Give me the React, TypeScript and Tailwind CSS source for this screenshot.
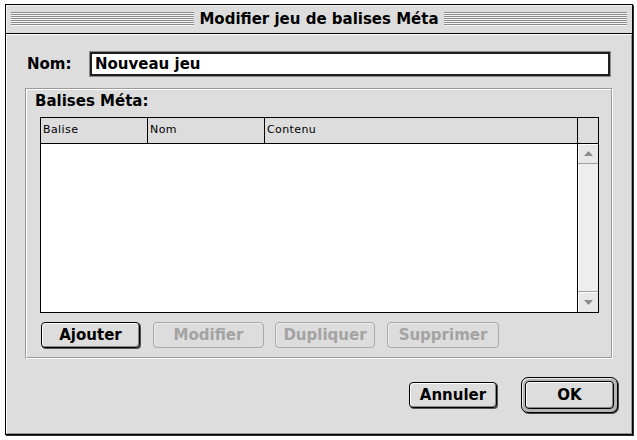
import React from 'react'

const stripes =
  'flex-1 h-[14px] bg-[repeating-linear-gradient(to_bottom,#8a8a8a_0px,#8a8a8a_1px,#f6f6f6_1px,#f6f6f6_2px)]'

function MacButton({
  label,
  width,
  disabled,
  className = '',
}: {
  label: string
  width: string
  disabled?: boolean
  className?: string
}) {
  return (
    <div
      className={`${width} h-[26px] rounded-[4px] border flex items-center justify-center text-[15px] font-bold ${
        disabled
          ? 'border-[#aaaaaa] text-[#a3a3a3] bg-[#dddddd] shadow-[inset_1px_1px_0_#ececec]'
          : 'border-black text-black bg-[#dddddd] shadow-[inset_1px_1px_0_#ffffff,inset_-1px_-1px_0_#888888,1px_1px_0_#555555]'
      } ${className}`}
    >
      {label}
    </div>
  )
}

function Arrow({ down }: { down?: boolean }) {
  return (
    <svg width="9" height="5" viewBox="0 0 9 5">
      <path d={down ? 'M0 0 L9 0 L4.5 5 Z' : 'M0 5 L4.5 0 L9 5 Z'} fill="#8c8c8c" />
    </svg>
  )
}

export default function App() {
  return (
    <div className="w-[637px] h-[440px] bg-white pt-[4px] pl-[5px] font-['DejaVu_Sans',sans-serif] text-black">
      <div className="w-[628px] h-[431px] border border-black bg-[#dddddd] flex flex-col shadow-[1px_1px_0_#333333]">
        {/* title bar */}
        <div className="h-[29px] border-b border-black flex items-center px-[5px] shadow-[inset_1px_1px_0_#f4f4f4]">
          <div className={stripes} />
          <div className="px-[5px] text-[15px] font-bold leading-[18px] whitespace-nowrap">
            Modifier jeu de balises Méta
          </div>
          <div className={stripes} />
        </div>

        <div className="flex-1 flex flex-col border-l border-t border-white border-r-[#999999] border-b-[#999999] border-r border-b">
          {/* name row */}
          <div className="mt-[16px] h-[26px] mx-[20px] flex items-center">
            <div className="w-[62px] text-[15px] font-bold">Nom:</div>
            <div className="flex-1 mx-[1px] h-[24px] bg-white border-2 border-[#1e1e1e] shadow-[0_0_0_1px_#8a8a8a] flex items-center pl-[3px] text-[15px] font-bold">
              Nouveau jeu
            </div>
          </div>

          {/* group box */}
          <div className="mt-[11px] mx-[18px] h-[271px] border border-t-[#9a9a9a] border-l-[#9a9a9a] border-r-white border-b-white">
            <div className="h-full flex flex-col border border-t-white border-l-white border-r-[#9a9a9a] border-b-[#9a9a9a]">
              <div className="mt-[2px] pl-[8px] text-[15px] font-bold leading-[18px]">Balises Méta:</div>

              <div className="mt-[7px] ml-[13px] mr-[12px] h-[196px] border border-black flex flex-col">
                <div className="h-[26px] border-b border-black flex text-[11px] tracking-[0.4px] bg-[#dddddd]">
                  <div className="w-[107px] border-r border-black pl-[2px] flex items-center">Balise</div>
                  <div className="w-[117px] border-r border-black pl-[2px] flex items-center">Nom</div>
                  <div className="flex-1 border-r border-black pl-[2px] flex items-center">Contenu</div>
                  <div className="w-[20px]" />
                </div>
                <div className="flex-1 flex">
                  <div className="flex-1 bg-white" />
                  <div className="w-[21px] border-l border-black flex flex-col bg-[#eeeeee]">
                    <div className="h-[20px] border-b border-[#a0a0a0] flex items-center justify-center bg-[#e8e8e8] shadow-[inset_1px_1px_0_#ffffff]">
                      <Arrow />
                    </div>
                    <div className="flex-1 shadow-[inset_1px_0_0_#ffffff]" />
                    <div className="h-[21px] border-t border-[#a0a0a0] flex items-center justify-center bg-[#e8e8e8] shadow-[inset_1px_1px_0_#ffffff]">
                      <Arrow down />
                    </div>
                  </div>
                </div>
              </div>

              <div className="mt-[9px] ml-[14px] flex items-center">
                <MacButton label="Ajouter" width="w-[99px]" />
                <MacButton label="Modifier" width="w-[111px]" disabled className="ml-[13px]" />
                <MacButton label="Dupliquer" width="w-[100px]" disabled className="ml-[11px]" />
                <MacButton label="Supprimer" width="w-[112px]" disabled className="ml-[12px]" />
              </div>
            </div>
          </div>

          {/* bottom buttons */}
          <div className="mt-[18px] mr-[13px] flex items-center justify-end">
            <MacButton label="Annuler" width="w-[88px]" className="mr-[24px]" />
            <div className="w-[97px] h-[36px] rounded-[7px] border border-black bg-[#b4b4b4] p-[3px] shadow-[inset_1px_1px_0_#eeeeee,1px_1px_0_#444444]">
              <div className="w-full h-full rounded-[4px] border border-black bg-[#dddddd] flex items-center justify-center text-[15px] font-bold shadow-[inset_1px_1px_0_#ffffff,inset_-1px_-1px_0_#888888]">
                OK
              </div>
            </div>
          </div>
        </div>
      </div>
    </div>
  )
}
